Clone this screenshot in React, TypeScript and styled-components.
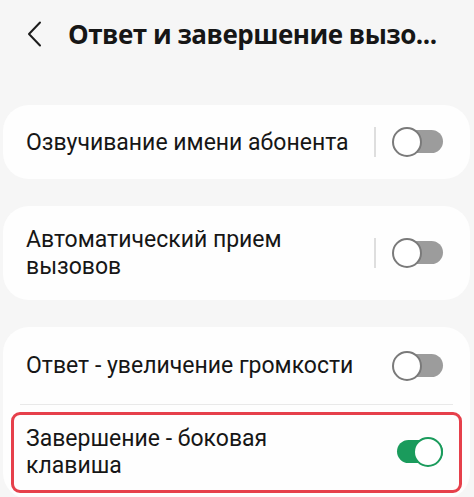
import React from "react";
import styled, { createGlobalStyle } from "styled-components";

const GlobalStyle = createGlobalStyle`
	html, body {
		margin: 0;
		padding: 0;
		background: #f6f6f6;
		font-family: Roboto, "Noto Sans", sans-serif;
		overflow: hidden;
	}
`;

export default function App() {
	return (
		<Page>
			<GlobalStyle />
			<Header>
				<BackButton>
					<svg width="16" height="26" viewBox="0 0 16 26" fill="none">
						<path d="M13 1.5L2 13l11 11.5" stroke="#1c1c1c" strokeWidth="2" strokeLinecap="round" strokeLinejoin="round" />
					</svg>
				</BackButton>
				<Title>Ответ и завершение вызо...</Title>
			</Header>
			<List>
				<Card>
					<Row>
						<Label>Озвучивание имени абонента</Label>
						<Splitter />
						<Toggle $on={false} />
					</Row>
				</Card>
				<Card>
					<Row $tall>
						<Label>
							Автоматический прием
							<br />
							вызовов
						</Label>
						<Splitter />
						<Toggle $on={false} />
					</Row>
				</Card>
				<Card>
					<Row $h={77}>
						<Label>Ответ - увеличение громкости</Label>
						<Toggle $on={false} />
					</Row>
					<Divider />
					<Row $tall>
						<Highlight />
						<Label>
							Завершение - боковая
							<br />
							клавиша
						</Label>
						<Toggle $on />
					</Row>
				</Card>
			</List>
		</Page>
	);
}

const Page = styled.div`
	width: 474px;
	height: 497px;
	overflow: hidden;
`;

const Header = styled.div`
	display: flex;
	align-items: center;
	height: 68px;
	padding-left: 27px;
	gap: 24px;
`;

const BackButton = styled.div`
	display: flex;
	align-items: center;
	width: 17px;
`;

const Title = styled.div`
	font-family: "Open Sans", Roboto, sans-serif;
	font-size: 26px;
	font-weight: 700;
	color: #161616;
	white-space: nowrap;
	letter-spacing: -0.5px;
`;

const List = styled.div`
	display: flex;
	flex-direction: column;
	gap: 27px;
	padding: 37px 4px 0 3px;
`;

const Card = styled.div`
	background: #fefefe;
	border-radius: 26px;
	display: flex;
	flex-direction: column;
`;

const Row = styled.div<{ $tall?: boolean; $h?: number }>`
	position: relative;
	display: flex;
	align-items: center;
	min-height: ${(p) => p.$h ?? (p.$tall ? 94 : 74)}px;
	padding: 0 27px 0 23px;
	box-sizing: border-box;
`;

const Label = styled.div`
	flex: 1;
	font-size: 23px;
	line-height: 27px;
	color: #161616;
`;

const Splitter = styled.div`
	width: 2px;
	height: 30px;
	background: #dedede;
	margin-right: 16px;
`;

const Divider = styled.div`
	height: 1px;
	background: #e9e9e9;
	margin: 0 17px;
`;

const Toggle = styled.div<{ $on: boolean }>`
	position: relative;
	width: 51px;
	height: 30px;
	flex-shrink: 0;

	&::before {
		content: "";
		position: absolute;
		left: 5px;
		right: 0;
		top: 3px;
		height: 23px;
		border-radius: 12px;
		background: ${(p) => (p.$on ? "#1a9b5c" : "#9c9c9c")};
	}

	&::after {
		content: "";
		position: absolute;
		top: 0;
		${(p) => (p.$on ? "right: 0;" : "left: 0;")}
		width: 26px;
		height: 26px;
		border-radius: 50%;
		background: #fff;
		border: 2px solid ${(p) => (p.$on ? "#1a9b5c" : "#7a7a7a")};
	}
`;

const Highlight = styled.div`
	position: absolute;
	left: 8px;
	right: 8px;
	top: 7px;
	height: 81px;
	box-sizing: border-box;
	border: 3px solid #e6404b;
	border-radius: 9px;
	pointer-events: none;
`;
